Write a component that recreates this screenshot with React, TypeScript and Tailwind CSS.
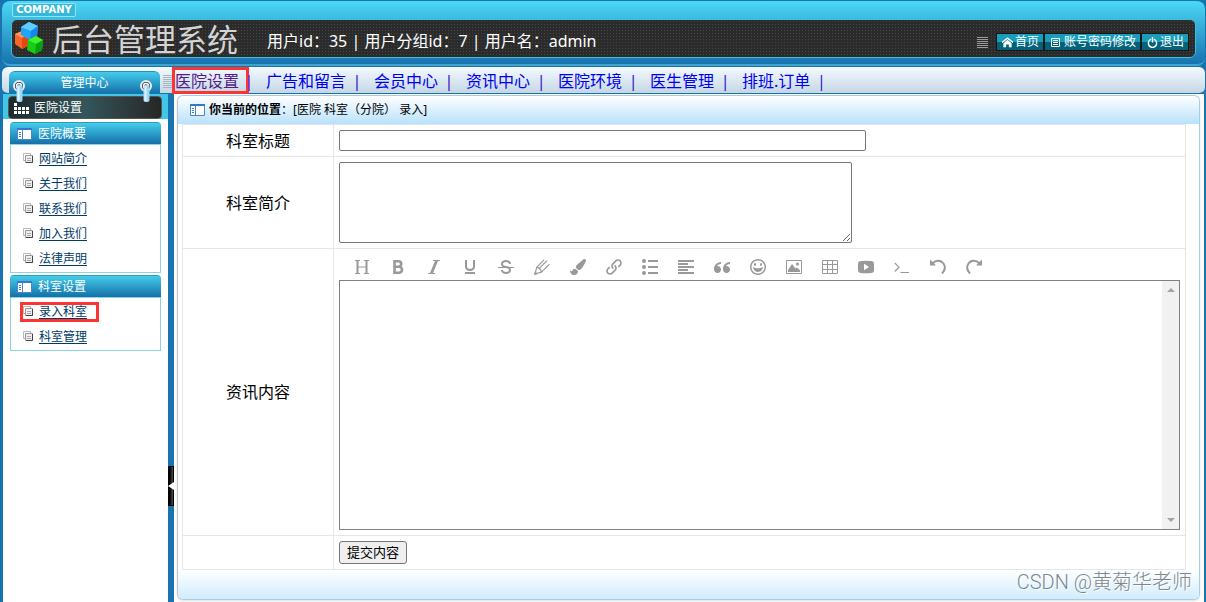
import type { ReactNode } from 'react'
import { FaPaintBrush } from 'react-icons/fa'
import {
  ImHappy,
  ImHome,
  ImItalic,
  ImLink,
  ImParagraphLeft,
  ImQuotesLeft,
  ImStrikethrough,
  ImSwitch,
  ImUnderline,
} from 'react-icons/im'

const NAV_ITEMS = ['医院设置', '广告和留言', '会员中心', '资讯中心', '医院环境', '医生管理', '排班.订单']

const MENU_GROUPS = [
  { title: '医院概要', items: ['网站简介', '关于我们', '联系我们', '加入我们', '法律声明'] },
  { title: '科室设置', items: ['录入科室', '科室管理'] },
]

const ACTIVE_NAV = '医院设置'
const ACTIVE_MENU = '录入科室'

const TOOLS: { label: string; icon: ReactNode }[] = [
  { label: '标题', icon: <HeadingIcon /> },
  { label: '粗体', icon: <BoldIcon /> },
  { label: '斜体', icon: <ImItalic /> },
  { label: '下划线', icon: <ImUnderline /> },
  { label: '删除线', icon: <ImStrikethrough /> },
  { label: '文字颜色', icon: <PencilIcon /> },
  { label: '背景颜色', icon: <FaPaintBrush /> },
  { label: '链接', icon: <ImLink /> },
  { label: '列表', icon: <ListIcon /> },
  { label: '对齐', icon: <ImParagraphLeft /> },
  { label: '引用', icon: <ImQuotesLeft /> },
  { label: '表情', icon: <ImHappy /> },
  { label: '图片', icon: <PictureIcon /> },
  { label: '表格', icon: <TableIcon /> },
  { label: '视频', icon: <VideoIcon /> },
  { label: '代码', icon: <TerminalIcon /> },
  { label: '撤销', icon: <UndoIcon /> },
  { label: '重做', icon: <UndoIcon className="-scale-x-100" /> },
]

export default function App() {
  return (
    <div className="flex min-h-screen flex-col bg-[#1873ae] font-['Noto_Sans','Noto_Sans_CJK_SC',sans-serif] text-black">
      <Header />
      <TopNav />
      <div className="flex flex-1 pl-[3px] pr-[2px]">
        <Sidebar />
        <div className="w-[6px] shrink-0 pt-[372px]">
          <button
            type="button"
            aria-label="收起菜单"
            className="flex h-10 w-[6px] items-center border border-black bg-gradient-to-r from-black to-[#555]"
          >
            <svg viewBox="0 0 6 8" className="-ml-px h-2 w-[6px] shrink-0 fill-white">
              <path d="M6 0v8L0 4z" />
            </svg>
          </button>
        </div>
        <MainPanel />
      </div>
    </div>
  )
}

function Header() {
  return (
    <header className="ml-[2px] mr-px rounded-lg border-b-2 border-t border-b-[#3fa3cf] border-t-[#1873ae] bg-gradient-to-b from-[#4ad8f5] via-[#32a5d2] to-[#1873b0] px-[9px] pb-[6px] pt-[2px]">
      <div className="ml-px flex h-[14px] w-16 items-center justify-center rounded-xs border border-[#8ce6f8] bg-[#37b7d9] font-['DejaVu_Sans',sans-serif] text-[10px] font-bold leading-none text-white">
        COMPANY
      </div>
      <div className="mt-[2px] flex h-[39px] items-center rounded-md border border-[#3fc0dc] bg-[#2b2b2b] bg-[radial-gradient(#444_1px,transparent_1px)] bg-[size:3px_3px] pl-[3px] pr-[7px]">
        <CubesLogo />
        <h1 className="ml-2 whitespace-nowrap text-[31px] leading-[36px] text-[#d4d4d4]">后台管理系统</h1>
        <p className="ml-[29px] mt-[5px] whitespace-nowrap text-base leading-6 text-white">
          用户id：35 | 用户分组id：7 | 用户名：admin
        </p>
        <div className="ml-auto mt-[7px] flex items-center gap-[2px] text-xs">
          <Stripes className="mr-[7px] h-[11px] w-[11px] text-[#9a9a9a]" />
          <HeaderButton icon={<ImHome className="size-[11px]" />}>首页</HeaderButton>
          <HeaderButton icon={<DocIcon />}>账号密码修改</HeaderButton>
          <HeaderButton icon={<ImSwitch className="size-[11px]" />}>退出</HeaderButton>
        </div>
      </div>
    </header>
  )
}

function HeaderButton({ icon, children }: { icon: ReactNode; children: ReactNode }) {
  return (
    <a
      href="#"
      className="flex h-4 items-center gap-[2px] whitespace-nowrap bg-[linear-gradient(#1a9dbb_50%,#056379_50%)] pl-[5px] pr-1 leading-4 text-white outline outline-1 outline-[#161616]"
    >
      {icon}
      {children}
    </a>
  )
}

function TopNav() {
  return (
    <nav className="ml-[2px] mr-px mt-px flex h-[27px] rounded-md border-b border-[#1873ae] bg-gradient-to-b from-[#f4faff] to-[#c5d7e4]">
      <div className="relative ml-[7px] mt-1 flex h-[22px] w-[151px] shrink-0 items-center justify-center rounded-t-md border-t border-[#2b8fb5] bg-gradient-to-b from-[#45cdec] to-[#1672ab] text-xs text-white">
        管理中心
        <Ring className="absolute left-1 top-2 z-10" />
        <Ring className="absolute right-2 top-2 z-10" />
      </div>
      <Stripes className="ml-[3px] mt-2 h-[13px] w-[9px] shrink-0 text-[#a9b6bf]" />
      <ul className="flex whitespace-nowrap text-base leading-[28px]">
        {NAV_ITEMS.map((item) => (
          <li key={item} className="flex">
            {item === ACTIVE_NAV ? (
              <a
                href="#"
                aria-current="page"
                className="-mr-[11px] flex h-[27px] w-[77px] items-center border-[3px] border-[#fb3434] text-[#551a8b]"
              >
                {item}
              </a>
            ) : (
              <a href="#" className="text-[#0000ee]">
                {item}
              </a>
            )}
            <span className="mr-[6px] w-[22px] text-center text-[#3a10c8]">|</span>
          </li>
        ))}
      </ul>
    </nav>
  )
}

function Sidebar() {
  return (
    <aside className="w-[165px] shrink-0 bg-white">
      <div className="bg-[#42c6e6] pl-[5px] pr-[6px] pt-[2px]">
        <div className="flex h-[23px] items-center gap-1 rounded border border-[#555] bg-gradient-to-r from-[#1d2a2d] via-[#33565c] to-[#262626] pl-[5px] text-xs text-white">
          <svg viewBox="0 0 16 12" className="h-3 w-4 fill-white">
            <path d="M0 1h3v3H0zM0 5h3v3H0zM4 5h3v3H4zM8 5h3v3H8zM12 5h3v3h-3zM0 9h3v3H0zM4 9h3v3H4zM8 9h3v3H8zM12 9h3v3h-3z" />
          </svg>
          医院设置
        </div>
      </div>
      <div className="ml-[7px] mt-[3px] flex w-[151px] flex-col gap-[2px]">
        {MENU_GROUPS.map((group) => (
          <section key={group.title}>
            <h2 className="flex h-[22px] items-center gap-[6px] rounded-t border-t border-[#2c9dba] bg-gradient-to-b from-[#45cdeb] to-[#1470a8] pl-[7px] pt-px text-xs text-white">
              <PanelIcon />
              {group.title}
            </h2>
            <ul className="border border-[#8ed2e2] py-px">
              {group.items.map((item) => (
                <li key={item} className="flex h-[25px] items-center pl-[9px]">
                  <a
                    href="#"
                    className={`flex items-center gap-[5px] border-[3px] pr-[9px] text-xs leading-[14px] text-[#003a66] ${
                      item === ACTIVE_MENU ? 'border-[#fb3434]' : 'border-transparent'
                    }`}
                  >
                    <PagesIcon />
                    <span className="underline underline-offset-2">{item}</span>
                  </a>
                </li>
              ))}
            </ul>
          </section>
        ))}
      </div>
    </aside>
  )
}

function MainPanel() {
  return (
    <main className="min-w-0 flex-1 bg-white pb-[2px] pl-[3px] pr-1 pt-px">
      <div className="flex h-full flex-col rounded-md border border-[#a4cee8] border-l-[#c2c2ca] shadow-sm">
        <div className="flex h-[28px] items-center rounded-t-md bg-gradient-to-b from-white to-[#b8e1fb] pl-3 text-xs">
          <PanelIcon />
          <strong className="ml-1">你当前的位置</strong>：
          <span className="whitespace-pre">[医院 科室（分院） 录入]</span>
        </div>
        <form className="ml-1 mr-[13px] border-x border-t border-[#e6e6e6]" onSubmit={(e) => e.preventDefault()}>
          <FormRow label="科室标题" htmlFor="title">
            <input
              id="title"
              type="text"
              className="block h-[21px] w-[527px] max-w-full rounded-xs border border-[#767676] px-1 text-[13px]"
            />
          </FormRow>
          <FormRow label="科室简介" htmlFor="intro">
            <textarea
              id="intro"
              className="block h-[81px] w-[513px] max-w-full resize rounded-xs border border-[#767676] p-0.5 text-[13px]"
            />
          </FormRow>
          <FormRow label="资讯内容" htmlFor="content">
            <div className="flex h-[26px] items-center gap-4 pl-[13px] text-[#999]">
              {TOOLS.map((tool) => (
                <button
                  key={tool.label}
                  type="button"
                  aria-label={tool.label}
                  className="flex size-5 items-center justify-center [&>svg]:size-4"
                >
                  {tool.icon}
                </button>
              ))}
            </div>
            <div className="flex h-[250px] border border-[#808080]">
              <textarea id="content" className="min-w-0 flex-1 resize-none p-2 text-base outline-none" />
              <div aria-hidden="true" className="flex w-[17px] flex-col items-center justify-between bg-[#f1f1f1] py-[7px]">
                <svg viewBox="0 0 8 4" className="h-1 w-2 fill-[#a3a3a3]">
                  <path d="M0 4h8L4 0z" />
                </svg>
                <svg viewBox="0 0 8 4" className="h-1 w-2 fill-[#a3a3a3]">
                  <path d="M0 0h8L4 4z" />
                </svg>
              </div>
            </div>
          </FormRow>
          <FormRow>
            <button
              type="submit"
              className="block h-[23px] rounded-[3px] border border-[#767676] bg-[#efefef] px-[7px] text-[13px] leading-[21px]"
            >
              提交内容
            </button>
          </FormRow>
        </form>
        <footer className="relative min-h-[28px] flex-1 rounded-b-md bg-gradient-to-b from-white to-[#d0ecfe]">
          <span className="absolute bottom-[5px] right-[7px] whitespace-nowrap font-['Roboto','Noto_Sans_CJK_SC',sans-serif] text-[20px] font-light leading-6 text-[#7f878c] [text-shadow:1px_1px_0_#ffffff]">
            CSDN @黄菊华老师
          </span>
        </footer>
      </div>
    </main>
  )
}

function FormRow({ label, htmlFor, children }: { label?: string; htmlFor?: string; children: ReactNode }) {
  return (
    <div className="grid grid-cols-[151px_1fr] border-b border-[#e6e6e6]">
      <div className="flex items-center justify-center border-r border-[#e6e6e6] text-base leading-5">
        {label && <label htmlFor={htmlFor}>{label}</label>}
      </div>
      <div className="min-w-0 p-[5px]">{children}</div>
    </div>
  )
}

/* Icons */

function CubesLogo() {
  return (
    <svg viewBox="0 0 29 35" className="h-[35px] w-[29px] shrink-0">
      <path d="M0 13l7-3 6 4v11l-6 3-7-5z" fill="#f9662a" />
      <path d="M0 13l7-3 6 4-6 3z" fill="#ff9a5a" />
      <path d="M7 17l6-3v11l-6 3z" fill="#e8480f" />
      <path d="M6 6l8-5 9 4-1 10-7 4-9-5z" fill="#22a4fb" />
      <path d="M6 6l8-5 9 4-7 5z" fill="#5bd0ff" />
      <path d="M16 10l7-5-1 10-7 4z" fill="#1486ee" />
      <path d="M13 19l8-4 7 4-1 10-7 4-8-4z" fill="#18cc18" />
      <path d="M13 19l8-4 7 4-7 4z" fill="#3ff02c" />
      <path d="M21 23l7-4-1 10-7 4z" fill="#07a30c" />
    </svg>
  )
}

function Stripes({ className }: { className: string }) {
  return (
    <span
      aria-hidden="true"
      className={`block bg-[repeating-linear-gradient(currentColor_0_1px,transparent_1px_2px)] ${className}`}
    />
  )
}

function Ring({ className }: { className: string }) {
  return (
    <svg viewBox="0 0 12 23" className={`h-[23px] w-3 ${className}`} fill="none">
      <circle cx="6" cy="6" r="5" fill="#333" stroke="#e6eef3" strokeWidth="2" />
      <circle cx="6" cy="6" r="2.500" stroke="#fff" strokeWidth="1.500" />
      <rect x="3.500" y="5" width="6" height="17" rx="2" fill="#9fd6f8" />
      <path d="M5.500 6v15" stroke="#dcf2ff" strokeWidth="2" />
    </svg>
  )
}

function DocIcon() {
  return (
    <svg viewBox="0 0 11 11" className="mr-px size-[11px]" fill="none" stroke="white">
      <path d="M1.500 1.500h8v8h-8zM3 3.500h5M3 5.500h5M3 7.500h5" />
    </svg>
  )
}

function PanelIcon() {
  return (
    <svg viewBox="0 0 15 12" className="h-3 w-[15px] shrink-0">
      <path d="M.5.5h14v11H.5z" fill="#fff" stroke="#4a86d0" />
      <path d="M0 0h15v2H0z" fill="#3a76d0" />
      <path d="M5.500 2v9" stroke="#4a86d0" />
      <path d="M2 4.500h2M2 6.500h2M2 8.500h2" stroke="#3d7fcf" />
    </svg>
  )
}

function PagesIcon() {
  return (
    <svg viewBox="0 0 11 11" className="size-[11px] shrink-0" fill="none">
      <path d="M.5 7.500v-7h7" stroke="#bbb" />
      <path d="M.5 7.500h2M7.500.5v2" stroke="#aaa" />
      <path d="M2.500 2.500h7v7h-7z" fill="#eee" stroke="#999" />
      <path d="M9.500 3v6.500H3" stroke="#444" />
      <path d="M4 5.500h4M4 7.500h4" stroke="#aaa" />
    </svg>
  )
}

function HeadingIcon() {
  return (
    <svg viewBox="0 0 16 16" fill="none" stroke="currentColor">
      <path d="M3.500 1.500v13M12.500 1.500v13" strokeWidth="2" />
      <path d="M1 1.500h5M10 1.500h5M1 14.500h5M10 14.500h5M4 8h8" strokeWidth="1.200" />
    </svg>
  )
}

function BoldIcon() {
  return (
    <svg viewBox="0 0 16 16" fill="none" stroke="currentColor" strokeWidth="2.600">
      <path d="M4.500 2.300h4a2.700 2.700 0 0 1 0 5.400h-4zM4.500 7.700H9a3 3 0 0 1 0 6H4.500z" />
    </svg>
  )
}

function PencilIcon() {
  return (
    <svg viewBox="0 0 16 16" fill="none" stroke="currentColor" strokeWidth="1.200" strokeLinejoin="round">
      <path d="M10 .8L2.800 8.200 1 15l6.500-1.800 8-8M2.800 8.200c2 .4 3.800 2.200 4.700 5M5 9.700l8-8" />
      <path d="M0 16l1-4 3 3z" fill="currentColor" stroke="none" />
    </svg>
  )
}

function ListIcon() {
  return (
    <svg viewBox="0 0 16 16" fill="currentColor">
      <circle cx="2" cy="2" r="2" />
      <circle cx="2" cy="8" r="2" />
      <circle cx="2" cy="14" r="2" />
      <path d="M6 1h10v2H6zM6 7h10v2H6zM6 13h10v2H6z" />
    </svg>
  )
}

function PictureIcon() {
  return (
    <svg viewBox="0 0 16 16" fill="currentColor">
      <path d="M.5 1.500h15v13H.5z" fill="none" stroke="currentColor" />
      <path d="M2 13V11l4-6 3.500 4.500L11 8.500l3 3V13z" />
      <circle cx="11.500" cy="5" r="1.500" />
    </svg>
  )
}

function TableIcon() {
  return (
    <svg viewBox="0 0 16 16" fill="none" stroke="currentColor">
      <path d="M.5 1.500h15v13H.5zM.5 5.500h15M.5 10.500h15M5.500 1v14M10.500 1v14" />
    </svg>
  )
}

function VideoIcon() {
  return (
    <svg viewBox="0 0 16 16" fill="currentColor" fillRule="evenodd">
      <path d="M3 2Q8 1.500 13 2q3 0 3 3v6q0 3-3 3-5 .5-10 0-3 0-3-3V5q0-3 3-3zM6 4.800v6.400L11 8z" />
    </svg>
  )
}

function TerminalIcon() {
  return (
    <svg viewBox="0 0 16 16" fill="none" stroke="currentColor" strokeWidth="1.200">
      <path d="M.8 4L5 8.200.8 12.500M6.500 13.500H15" />
    </svg>
  )
}

function UndoIcon({ className }: { className?: string }) {
  return (
    <svg viewBox="0 0 16 16" className={className}>
      <path d="M0 .5v6h6z" fill="currentColor" />
      <path d="M2.500 4.500C6 .5 11 1 13.500 4.500c2 3 1.500 7-1.500 10" fill="none" stroke="currentColor" strokeWidth="2" />
    </svg>
  )
}
